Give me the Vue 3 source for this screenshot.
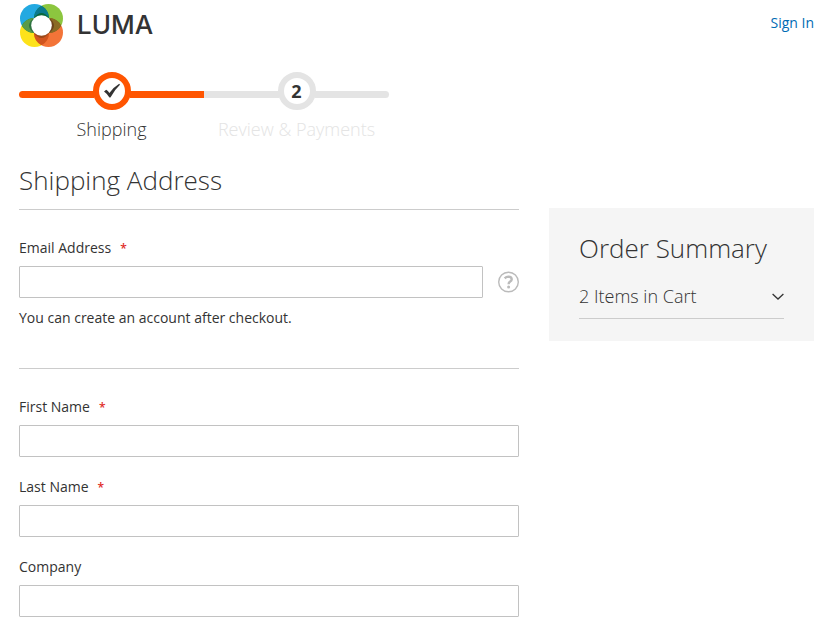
<script setup>
import { ref } from 'vue'

const steps = [
  { label: 'Shipping', state: 'active' },
  { label: 'Review & Payments', state: 'pending' }
]

const fields = [
  { id: 'firstname', label: 'First Name', required: true },
  { id: 'lastname', label: 'Last Name', required: true },
  { id: 'company', label: 'Company', required: false }
]

const email = ref('')
const values = ref({ firstname: '', lastname: '', company: '' })
</script>

<template>
  <div class="page">
    <header class="header">
      <a class="logo" href="#" aria-label="Luma">
        <svg class="logo-mark" viewBox="-0.5 -0.5 44 44" width="44" height="44" aria-hidden="true">
          <circle class="petal" cx="15" cy="15" r="14.5" fill="#23a9e1" />
          <circle class="petal" cx="29" cy="15" r="14.5" fill="#8cc63f" />
          <circle class="petal" cx="15" cy="29" r="14.5" fill="#fde21a" />
          <circle class="petal" cx="29" cy="29" r="14.5" fill="#f37438" />
          <path d="M22 2.3A14.5 14.5 0 0 1 22 27.7A14.5 14.5 0 0 1 22 2.3Z" fill="#0b7a8f" />
          <path d="M2.3 22A14.5 14.5 0 0 1 27.7 22A14.5 14.5 0 0 1 2.3 22Z" fill="#5a9a48" />
          <path d="M16.3 22A14.5 14.5 0 0 1 41.7 22A14.5 14.5 0 0 1 16.3 22Z" fill="#8a6a24" />
          <path d="M22 16.3A14.5 14.5 0 0 1 22 41.7A14.5 14.5 0 0 1 22 16.3Z" fill="#d0551f" />
          <path d="M14.5 14.5Q22 4.5 29.5 14.5L22 22Z" fill="#08683c" />
          <path d="M14.5 14.5Q4.5 22 14.5 29.5L22 22Z" fill="#2e7340" />
          <path d="M29.5 14.5Q39.5 22 29.5 29.5L22 22Z" fill="#6d431c" />
          <path d="M14.5 29.5Q22 39.5 29.5 29.5L22 22Z" fill="#9b4a1b" />
          <circle cx="22" cy="22" r="10.3" fill="#fff" />
        </svg>
        <span class="logo-text">LUMA</span>
      </a>
      <a class="sign-in" href="#">Sign In</a>
    </header>

    <ol class="progress">
      <li v-for="(step, i) in steps" :key="step.label" class="step" :class="step.state">
        <span class="track">
          <span class="badge">
            <svg v-if="step.state === 'active'" viewBox="0 0 18 16" width="18" height="16" aria-hidden="true">
              <path d="M1 8.5L3.2 6.7Q5 7.8 6.4 10Q10.3 4.4 16.2 0.8L17 1.8Q11.6 6.8 7.6 14.2Q7 15 6.2 14.2Q4.2 10.8 1 8.5Z" fill="#333" />
            </svg>
            <template v-else>{{ i + 1 }}</template>
          </span>
        </span>
        <span class="step-label">{{ step.label }}</span>
      </li>
    </ol>

    <div class="columns">
      <main class="main">
        <h1 class="title">Shipping Address</h1>
        <form @submit.prevent>
          <div class="account">
            <label class="label" for="email">Email Address<span class="required">*</span></label>
            <div class="control">
              <input id="email" v-model="email" class="input" type="email" />
              <button class="help" type="button" aria-label="Help">
                <svg viewBox="0 0 22 22" width="22" height="22" aria-hidden="true">
                  <circle cx="11.5" cy="11" r="9.8" fill="none" stroke="#bbb" stroke-width="1.4" />
                  <path d="M7.7 7.4Q9.3 5.6 11.5 5.6Q14.7 5.7 14.7 8.3Q14.6 9.7 13.2 10.6Q11.6 11.6 11.6 13.2" fill="none" stroke="#bbb" stroke-width="2.4" />
                  <circle cx="11.6" cy="16" r="1.5" fill="#bbb" />
                </svg>
              </button>
            </div>
            <p class="note">You can create an account after checkout.</p>
          </div>
          <div class="fields">
            <div v-for="f in fields" :key="f.id" class="field">
              <label class="label" :for="f.id">{{ f.label }}<span v-if="f.required" class="required">*</span></label>
              <input :id="f.id" v-model="values[f.id]" class="input" type="text" />
            </div>
          </div>
        </form>
      </main>

      <aside class="summary">
        <h2 class="summary-title">Order Summary</h2>
        <button class="cart-toggle" type="button">
          <span>2 Items in Cart</span>
          <svg viewBox="0 0 12 8" width="12" height="8" aria-hidden="true">
            <path d="M0.6 1L6 6L11.4 1" fill="none" stroke="#333" stroke-width="1.3" />
          </svg>
        </button>
      </aside>
    </div>
  </div>
</template>

<style>
body {
  margin: 0;
  background: #fff;
}
</style>

<style scoped>
.page {
  box-sizing: border-box;
  padding: 3px 16px 11px 19px;
  color: #333;
  font-family: "Open Sans", "Noto Sans", sans-serif;
  font-size: 14px;
  line-height: 20px;
}

.page * {
  box-sizing: border-box;
}

.header {
  display: flex;
  justify-content: space-between;
  align-items: flex-start;
}

.logo {
  display: flex;
  align-items: center;
  gap: 14px;
  color: #333;
  text-decoration: none;
}

.petal {
  mix-blend-mode: multiply;
}

.logo-mark {
  display: block;
  isolation: isolate;
}

.logo-text {
  font-family: Inter, Lato, sans-serif;
  font-size: 26px;
  font-weight: 500;
  line-height: 44px;
}

.sign-in {
  padding-top: 10px;
  color: #006bb4;
  text-decoration: none;
}

.progress {
  display: flex;
  max-width: 370px;
  margin: 25px 0 0;
  padding: 0;
  list-style: none;
}

.step {
  flex: 1;
  color: #e4e4e4;
  text-align: center;
}

.track {
  display: flex;
}

.track::before,
.track::after {
  content: "";
  flex: 1;
  height: 7px;
  margin-top: 19px;
  background: currentColor;
}

.step:first-child .track::before {
  border-radius: 6px 0 0 6px;
}

.step:last-child .track::after {
  border-radius: 0 6px 6px 0;
}

.active {
  color: #ff5501;
}

.badge {
  display: flex;
  align-items: center;
  justify-content: center;
  width: 38px;
  height: 38px;
  margin: 0 -1px;
  border: 6px solid #e4e4e4;
  border-radius: 50%;
  background: #fff;
  color: #333;
  font-size: 18px;
  font-weight: 700;
}

.active .badge {
  border-color: #ff5501;
}

.step-label {
  display: block;
  padding-top: 7px;
  font-size: 18px;
  font-weight: 300;
  line-height: 24px;
}

.active .step-label {
  color: #333;
}

.columns {
  display: flex;
  align-items: flex-start;
  gap: 30px;
  margin-top: 21px;
}

.main {
  flex: 1;
}

.title {
  margin: 0;
  padding-bottom: 11px;
  border-bottom: 1px solid #ccc;
  font-size: 26px;
  font-weight: 300;
  line-height: 36px;
}

.account {
  padding: 28px 0 40px;
  border-bottom: 1px solid #ccc;
}

.label {
  display: block;
  margin-bottom: 8px;
}

.required {
  margin-left: 9px;
  color: #e02b27;
  font-size: 12px;
  font-weight: 600;
  line-height: 12px;
}

.control {
  display: flex;
  align-items: center;
  gap: 14px;
}

.input {
  display: block;
  width: 100%;
  height: 32px;
  padding: 0 9px;
  border: 1px solid #c2c2c2;
  border-radius: 1px;
  background: #fff;
  color: #333;
  font: inherit;
}

.help {
  flex: none;
  padding: 0;
  border: 0;
  background: none;
  cursor: pointer;
}

.help svg {
  display: block;
}

.note {
  margin: 10px 0 0;
}

.fields {
  display: flex;
  flex-direction: column;
  gap: 20px;
  padding-top: 28px;
}

.summary {
  width: 33.3333%;
  margin-top: 46px;
  padding: 22px 30px;
  background: #f5f5f5;
}

.summary-title {
  margin: 0;
  font-size: 26px;
  font-weight: 300;
  line-height: 36px;
}

.cart-toggle {
  display: flex;
  align-items: center;
  justify-content: space-between;
  width: 100%;
  margin-top: 18px;
  padding: 0 0 9px;
  border: 0;
  border-bottom: 1px solid #ccc;
  background: none;
  color: #333;
  font: inherit;
  font-size: 18px;
  font-weight: 300;
  line-height: 25px;
  cursor: pointer;
}
</style>
